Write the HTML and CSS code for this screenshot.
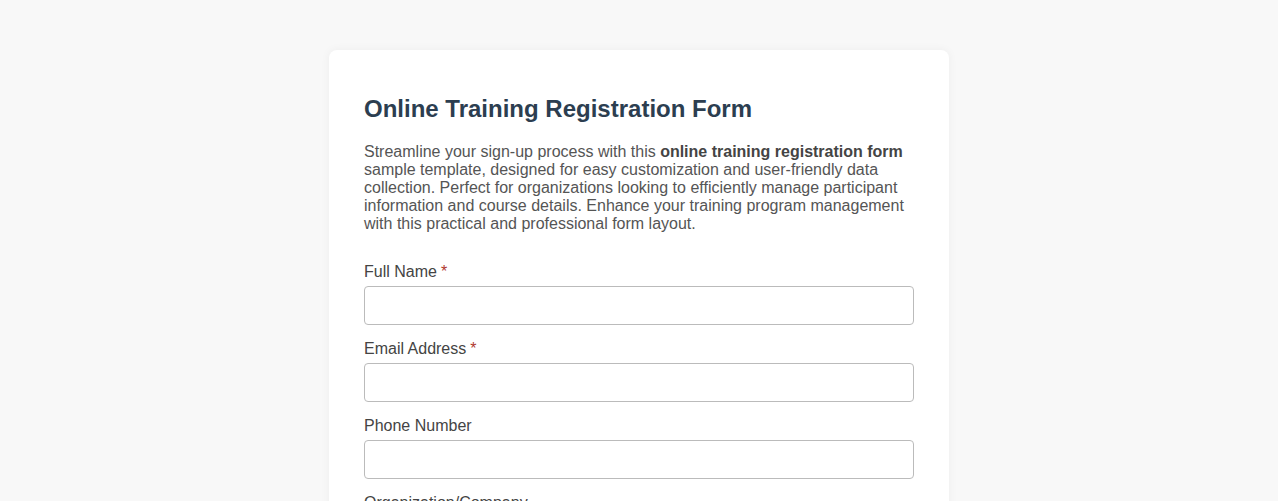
FILE: index.html
```html
<html>
  <head>
    <link rel="stylesheet" href="styles.css">
    <title>Online Training Registration Form</title>
  </head>
  <body>
    <div class="card">
      <h1>Online Training Registration Form</h1>
      <p class="intro">
        Streamline your sign-up process with this <strong>online training registration form</strong>
        sample template, designed for easy customization and user-friendly data collection. Perfect for
        organizations looking to efficiently manage participant information and course details. Enhance
        your training program management with this practical and professional form layout.
      </p>
      <form>
        <div class="field">
          <label for="name">Full Name<span class="req">*</span></label>
          <input id="name" type="text">
        </div>
        <div class="field">
          <label for="email">Email Address<span class="req">*</span></label>
          <input id="email" type="email">
        </div>
        <div class="field">
          <label for="phone">Phone Number</label>
          <input id="phone" type="tel">
        </div>
        <div class="field">
          <label for="org">Organization/Company</label>
          <input id="org" type="text">
        </div>
      </form>
    </div>
  </body>
</html>
```

FILE: styles.css
```css
body {
  margin: 0;
  padding: 50px 0;
  background-color: #f8f8f8;
  font-family: "Liberation Sans", Arial, sans-serif;
}

.card {
  width: 620px;
  box-sizing: border-box;
  margin: 0 auto;
  padding: 45px 35px 35px;
  background-color: #fff;
  border-radius: 8px;
  box-shadow: 0 0 10px rgba(0, 0, 0, 0.05);
}

h1 {
  margin: 0 0 20px;
  font-size: 24px;
  color: #2c3e50;
}

.intro {
  margin: 0 0 30px;
  font-size: 16px;
  line-height: 18px;
  color: #555;
}

.intro strong {
  color: #444;
}

.field {
  display: flex;
  flex-direction: column;
  margin-bottom: 15px;
}

label {
  font-size: 16px;
  line-height: 18px;
  color: #444;
  margin-bottom: 5px;
}

.req {
  color: #b03a2e;
  margin-left: 4px;
}

input {
  height: 39px;
  box-sizing: border-box;
  border: 1px solid #bbb;
  border-radius: 4px;
  padding: 8px 10px;
  font-size: 16px;
  font-family: inherit;
}
```
